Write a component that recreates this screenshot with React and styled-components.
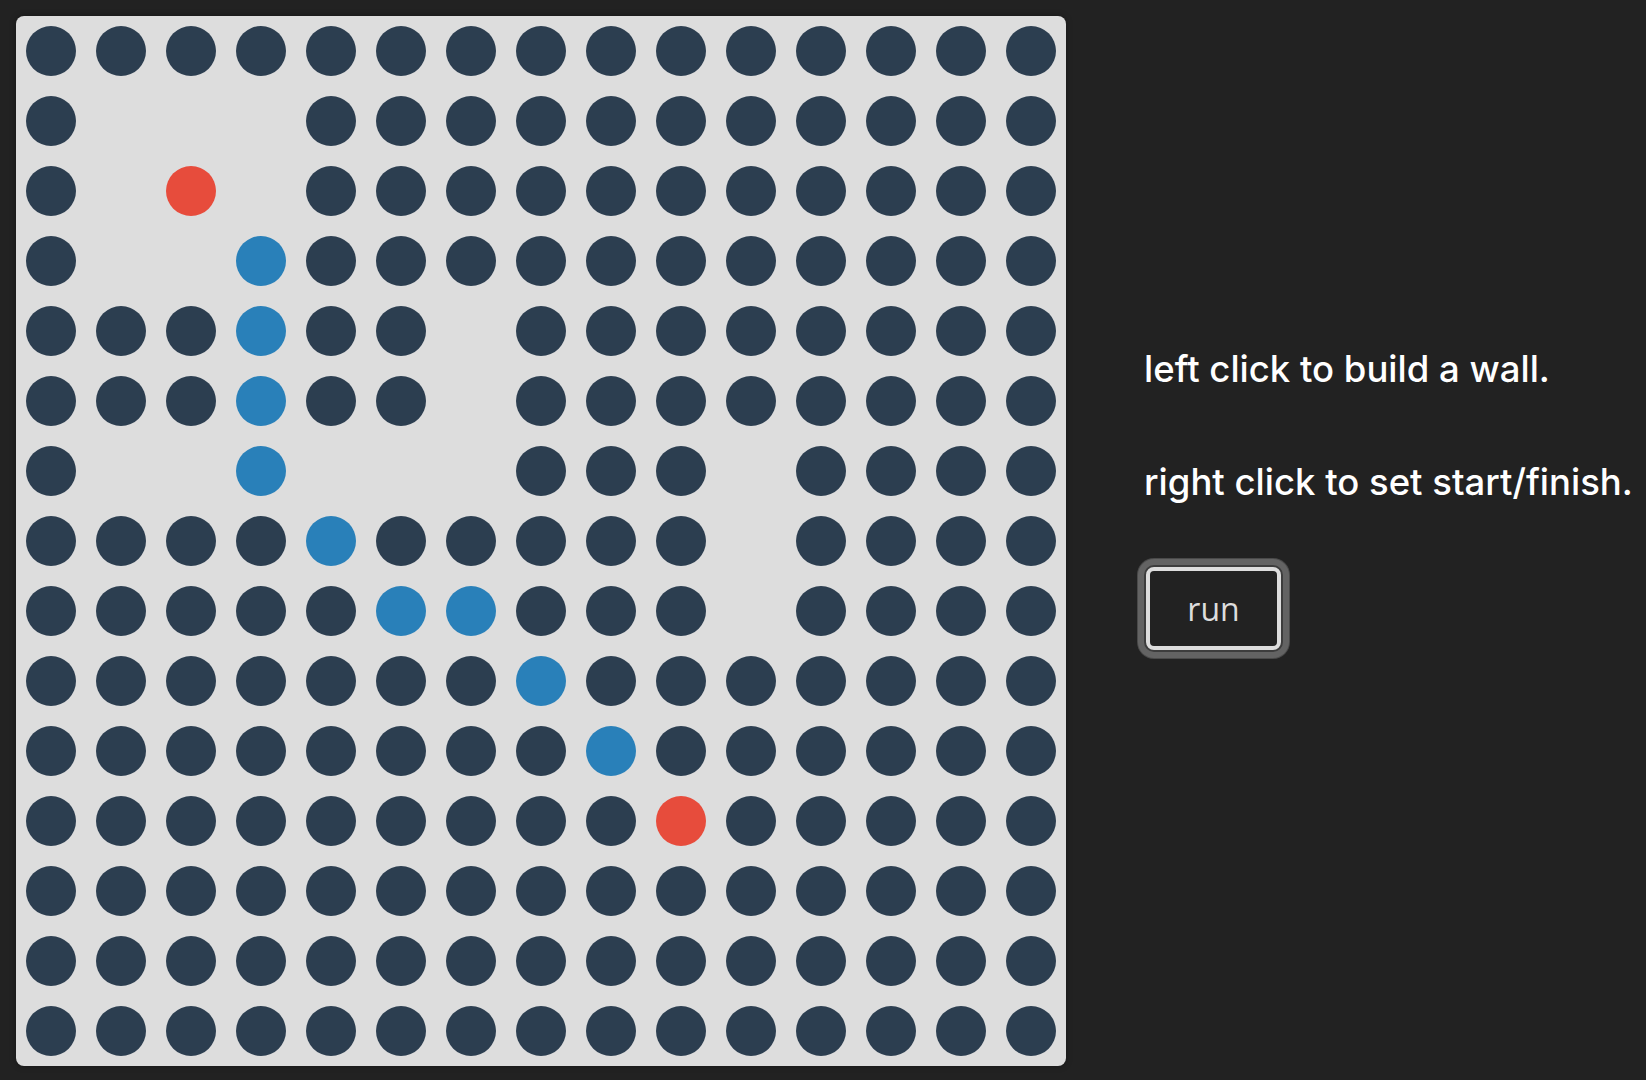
import React from "react";
import styled, { createGlobalStyle } from "styled-components";

const Global = createGlobalStyle`
  html, body { padding: 0; background: #222; }
  body { margin: 8px; font-family: Inter, "Open Sans", sans-serif; }
`;

const grid = [
  "WWWWWWWWWWWWWWW",
  "W...WWWWWWWWWWW",
  "W.R.WWWWWWWWWWW",
  "W..BWWWWWWWWWWW",
  "WWWBWW.WWWWWWWW",
  "WWWBWW.WWWWWWWW",
  "W..B...WWW.WWWW",
  "WWWWBWWWWW.WWWW",
  "WWWWWBBWWW.WWWW",
  "WWWWWWWBWWWWWWW",
  "WWWWWWWWBWWWWWW",
  "WWWWWWWWWRWWWWW",
  "WWWWWWWWWWWWWWW",
  "WWWWWWWWWWWWWWW",
  "WWWWWWWWWWWWWWW",
];

const colors = { W: "#2c3e50", R: "#e74c3c", B: "#2980b9" };

const Page = styled.div`
  display: flex;
  align-items: flex-start;
`;

const Board = styled.div`
  margin: 8px;
  display: grid;
  grid-template-columns: repeat(15, 70px);
  grid-template-rows: repeat(15, 70px);
  background: #ddd;
  border-radius: 8px;
  box-shadow: 0 0 6px rgba(0, 0, 0, 0.35);
`;

const Cell = styled.div`
  display: flex;
  align-items: center;
  justify-content: center;
`;

const Dot = styled.div`
  width: 50px;
  height: 50px;
  border-radius: 50%;
  background: ${(p) => p.$color};
`;

const Panel = styled.div`
  margin: 339px 0 0 70px;
  display: flex;
  flex-direction: column;
  align-items: flex-start;
  color: #fff;
  font-family: Inter, "Open Sans", sans-serif;
`;

const Line = styled.p`
  margin: 0 0 ${(p) => p.$gap}px;
  font-size: 36.5px;
  font-weight: 500;
  line-height: 44px;
  white-space: nowrap;
`;

const RunButton = styled.button`
  margin-left: 2px;
  width: 135px;
  height: 83px;
  padding: 0;
  background: #222;
  color: #ddd;
  border: 4px solid #ddd;
  border-radius: 8px;
  font-family: "Open Sans", sans-serif;
  font-size: 32px;
  cursor: pointer;
  box-shadow: 0 0 0 2px #3d3d3d, 0 0 0 8px #636363, 0 0 0 9px #4a4a4a;
`;

export default function App() {
  return (
    <>
      <Global />
      <Page>
        <Board>
          {grid.map((row, r) =>
            row.split("").map((ch, c) => (
              <Cell key={`${r}-${c}`}>
                {ch !== "." && <Dot $color={colors[ch]} />}
              </Cell>
            ))
          )}
        </Board>
        <Panel>
          <Line $gap={69}>left click to build a wall.</Line>
          <Line $gap={63}>right click to set start/finish.</Line>
          <RunButton>run</RunButton>
        </Panel>
      </Page>
    </>
  );
}
